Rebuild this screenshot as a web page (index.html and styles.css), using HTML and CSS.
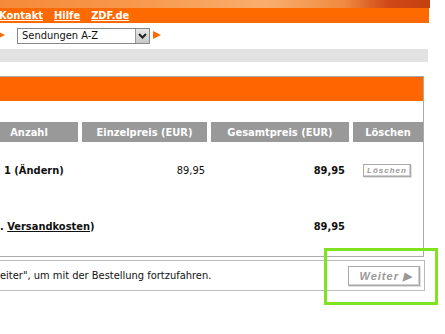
FILE: index.html
```html
<!DOCTYPE html>
<html lang="de">
<head>
<meta charset="utf-8">
<link rel="stylesheet" href="styles.css">
</head>
<body>
<div class="top"></div>
<div class="nav">
  <a href="#">Kontakt</a>
  <a href="#">Hilfe</a>
  <a href="#">ZDF.de</a>
</div>
<div class="selrow">
  <span class="tri tri-left"></span>
  <div class="select"><span class="seltext">Sendungen A-Z</span><span class="selbtn"><svg width="9" height="6" viewBox="0 0 9 6"><path d="M1 1 L4.5 4.5 L8 1" fill="none" stroke="#222" stroke-width="2"/></svg></span></div>
  <span class="tri"></span>
</div>
<div class="greybar"></div>
<div class="box">
  <div class="boxhead"></div>
  <table class="cart">
    <thead>
      <tr>
        <th class="c-anz">Anzahl</th>
        <th class="c-ein">Einzelpreis (EUR)</th>
        <th class="c-ges">Gesamtpreis (EUR)</th>
        <th class="c-del">Löschen</th>
      </tr>
    </thead>
    <tbody>
      <tr class="r1">
        <td class="c-anz b qty">1 (Ändern)</td>
        <td class="c-ein num">89,95</td>
        <td class="c-ges num b">89,95</td>
        <td class="c-del"><span class="btn small">Löschen</span></td>
      </tr>
      <tr class="r2">
        <td class="c-anz b ship" colspan="2">. <a href="#">Versandkosten</a>)</td>
        <td class="c-ges num b">89,95</td>
        <td class="c-del"></td>
      </tr>
    </tbody>
  </table>
</div>
<div class="foot">
  <span class="foottext">eiter", um mit der Bestellung fortzufahren.</span>
  <span class="btn weiter">Weiter ▶</span>
</div>
<div class="highlight"></div>
</body>
</html>
```
FILE: styles.css
```css
html, body { margin: 0; padding: 0; background: #fff; }
body {
  font-family: "DejaVu Sans Condensed", "DejaVu Sans", Verdana, sans-serif;
  font-size: 11px;
  color: #111;
  width: 445px;
  height: 334px;
  overflow: hidden;
  position: relative;
}
.top {
  width: 430px;
  height: 8px;
  background: linear-gradient(90deg, #f58a3a 0%, #f7974a 30%, #f9ae6e 62%, #f08a40 80%, #cf4a18 90%, #c5400f 100%);
}
.nav {
  width: 430px;
  height: 15px;
  background: #ff6a00;
  display: flex;
  align-items: center;
  gap: 11px;
  margin-left: -1px;
  font-weight: bold;
  font-size: 11px;
}
.nav a { color: #fff; text-decoration: underline; }
.selrow {
  height: 26px;
  display: flex;
  align-items: center;
  gap: 3px;
}
.tri {
  width: 0; height: 0;
  border-top: 4px solid transparent;
  border-bottom: 4px solid transparent;
  border-left: 8px solid #ff6a00;
  margin-top: -2px;
}
.tri-left { margin-left: -3px; margin-right: 9px; }
.select {
  width: 131px;
  height: 14px;
  border: 1px solid #888;
  display: flex;
  align-items: center;
  justify-content: space-between;
  font-size: 11px;
  background: #fff;
  margin-top: -1px;
}
.seltext { padding-left: 4px; }
.selbtn {
  width: 13px;
  height: 14px;
  background: linear-gradient(#e8e8e8, #c8c8c8);
  border-left: 1px solid #999;
  display: flex;
  align-items: center;
  justify-content: center;
}
.greybar {
  width: 428px;
  height: 13px;
  background: #e2e2e2;
}
.box {
  margin-top: 14px;
  margin-left: -20px;
  width: 443px;
  height: 179px;
  border: 1px solid #aaa;
  border-left: none;
}
.boxhead {
  height: 24px;
  background: #ff6600;
}
.cart {
  margin-top: 21px;
  border-collapse: separate;
  border-spacing: 4px 0;
  margin-left: -4px;
  table-layout: fixed;
  width: 451px;
}
.cart th, .cart td { box-sizing: border-box; padding: 0; }
.cart th {
  background: #999;
  color: #fff;
  font-weight: bold;
  height: 20px;
  text-align: center;
}
.cart .c-anz { width: 98px; }
.cart .c-ein { width: 125px; }
.cart .c-ges { width: 138px; }
.cart .c-del { width: 70px; }
.cart .r1 td { height: 56px; }
.cart .r2 td { height: 56px; }
.cart .b { font-weight: bold; }
.cart .num { text-align: right; }
.cart .c-ein.num { padding-right: 2px; }
.cart .c-ges.num { padding-right: 4px; }
.cart .qty { padding-left: 24px; white-space: nowrap; }
.cart .ship { padding-left: 20px; white-space: nowrap; }
.ship a { color: #111; }
.btn {
  display: inline-block;
  white-space: nowrap;
  border: 1px solid #aaa;
  box-shadow: inset -1px -1px 0 #d0d0d0, 1px 1px 0 #e0e0e0;
  color: #999;
  font-family: "Liberation Sans", Arial, sans-serif;
  font-style: italic;
  font-weight: bold;
  letter-spacing: 1px;
  background: #fff;
}
.btn.small {
  font-size: 8px;
  padding: 1px 3px;
  margin-left: 10px;
}
.foot {
  margin-top: 3px;
  margin-left: -20px;
  width: 444px;
  height: 29px;
  border: 1px solid #bbb;
  border-left: none;
  display: flex;
  align-items: center;
  justify-content: space-between;
}
.foottext { padding-left: 20px; }
.weiter {
  font-size: 11px;
  line-height: 14px;
  padding: 2px 7px 2px 11px;
  margin-right: 4px;
}
.highlight {
  position: absolute;
  left: 324px;
  top: 248px;
  width: 108px;
  height: 51px;
  border: 3px solid #80e31f;
}
```
